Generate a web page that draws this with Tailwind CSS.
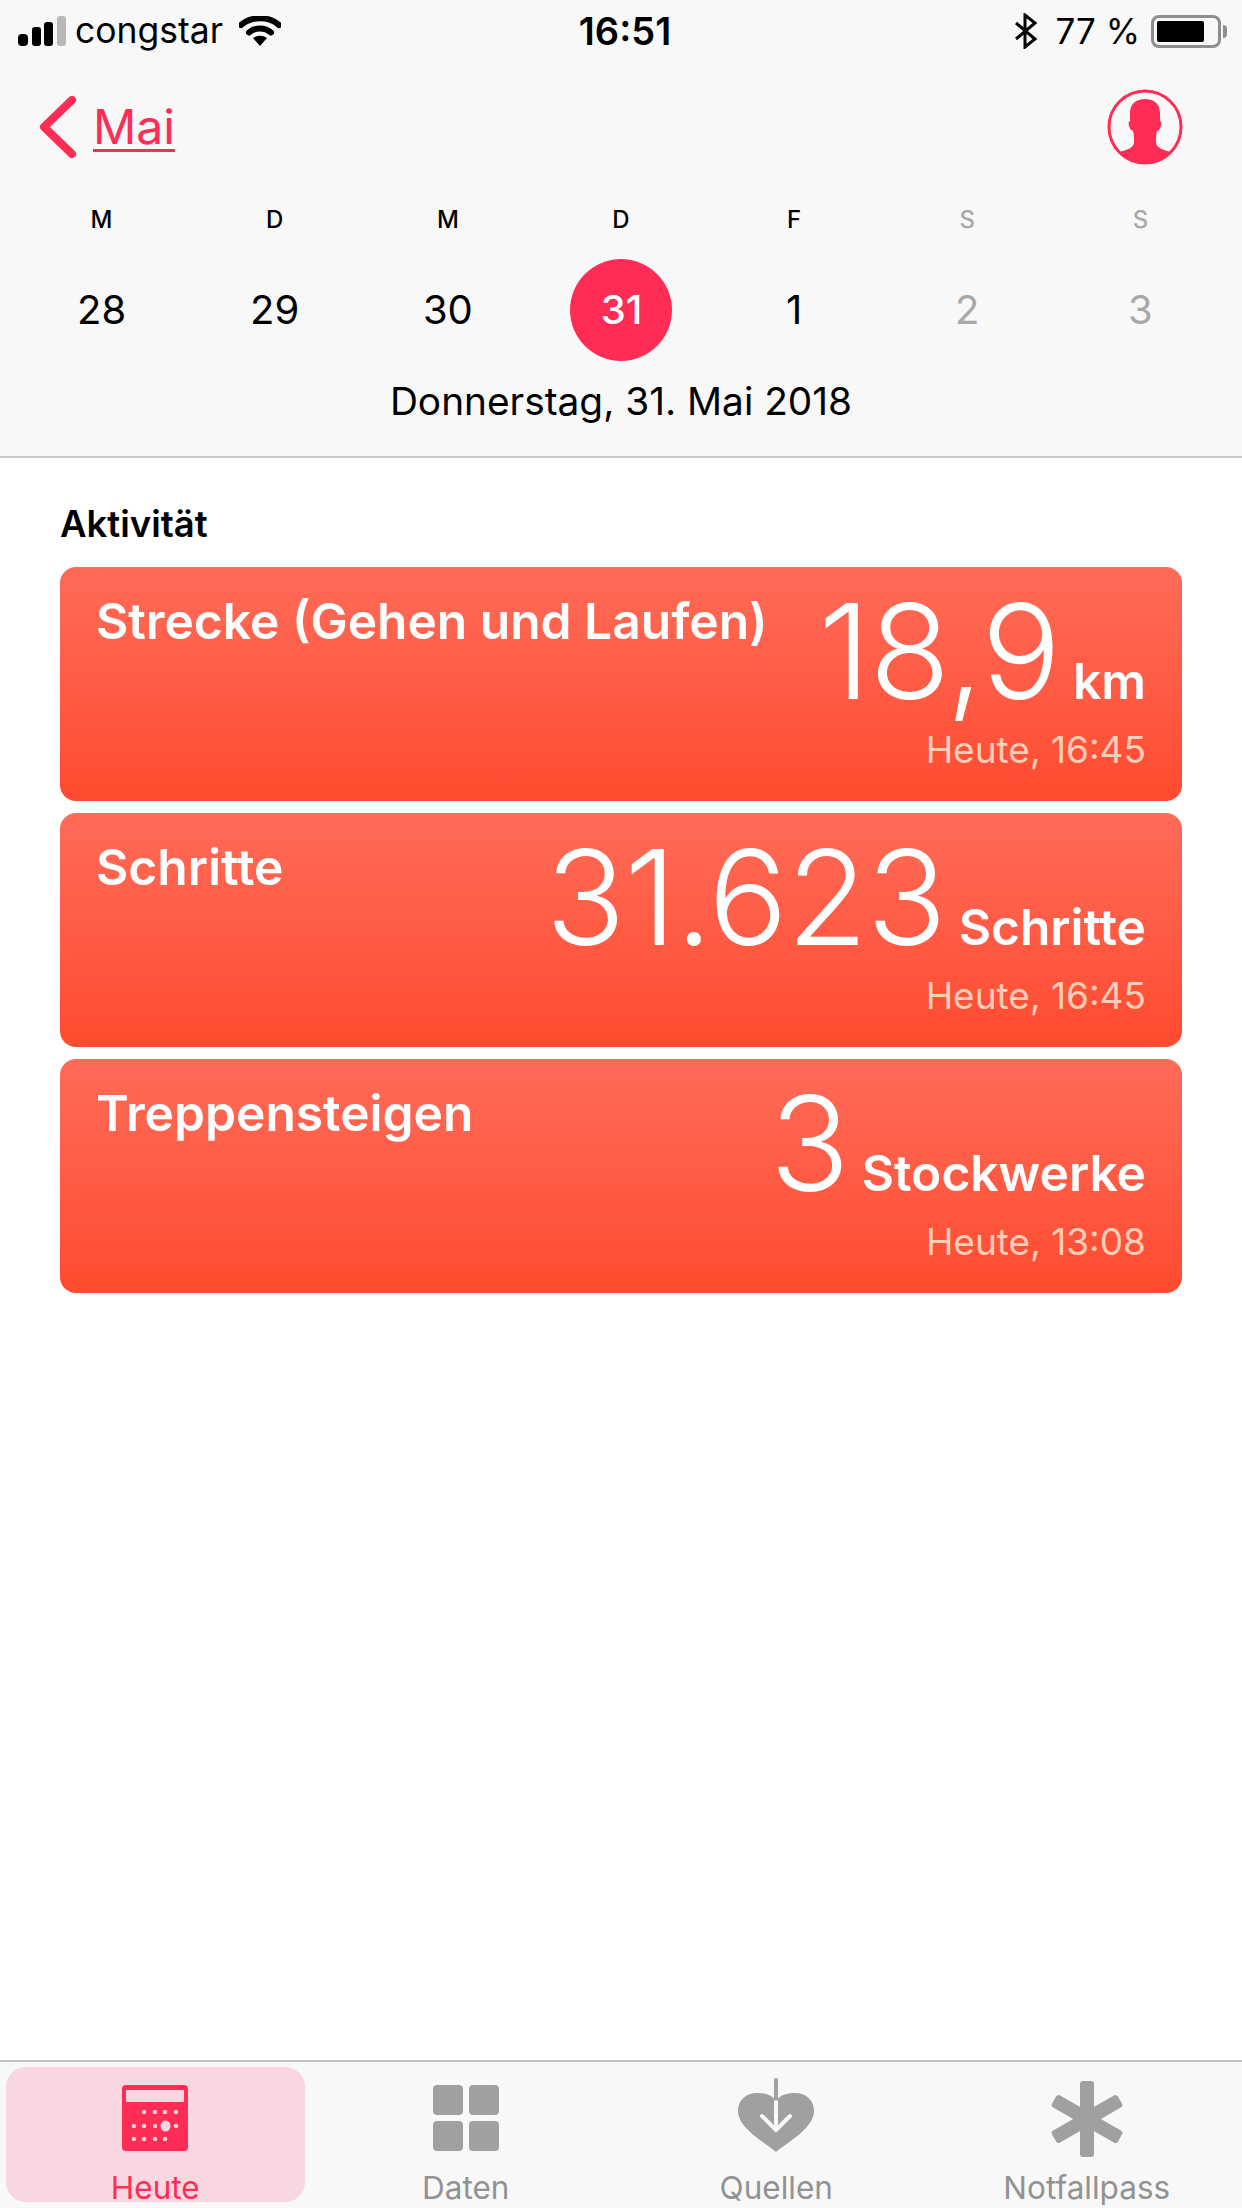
<!DOCTYPE html>
<html lang="de">
  <head>
    <meta charset="UTF-8" />
    <meta name="viewport" content="width=device-width, initial-scale=1.0" />
    <title>Health</title>
    <script src="https://cdn.jsdelivr.net/npm/@tailwindcss/browser@4"></script>
  </head>
  <body class="bg-white font-['Inter',sans-serif]">
    <div class="flex flex-col w-[1242px] h-[2208px] overflow-hidden">
      <!-- Header -->
      <header class="bg-[#f8f8f8] border-b-2 border-[#c8c8c8] h-[458px] shrink-0">
        <!-- Status bar -->
        <div class="grid grid-cols-3 items-center h-[62px] pl-[18px] pr-[15px] text-black">
          <div class="flex items-center">
            <svg width="48" height="30" viewBox="0 0 48 30">
              <rect x="0" y="18" width="10" height="12" rx="4" fill="#000" />
              <rect x="14" y="11" width="9" height="19" rx="3" fill="#000" />
              <rect x="26" y="6" width="9" height="24" rx="3" fill="#000" />
              <rect x="39" y="0" width="9" height="30" rx="3" fill="#b8b8b8" />
            </svg>
            <span class="ml-[9px] text-[35.500px] leading-none">congstar</span>
            <svg class="ml-[16px]" width="42" height="30" viewBox="0 0 42 30">
              <path d="M2 9 C12 0 30 0 40 9" fill="none" stroke="#000" stroke-width="6" stroke-linecap="round" />
              <path d="M10 16.500 C16 11 26 11 32 16.500" fill="none" stroke="#000" stroke-width="6" stroke-linecap="round" />
              <path d="M14 22 L21 30 L28 22 C24 19 18 19 14 22 Z" fill="#000" />
            </svg>
          </div>
          <div class="pl-[5px] text-center text-[38px] font-semibold leading-none">16:51</div>
          <div class="flex items-center justify-end">
            <svg width="24" height="36" viewBox="0 0 24 36">
              <path d="M2 10 L21 26 L11 34 L11 2 L21 10 L2 26" fill="none" stroke="#000" stroke-width="3" />
            </svg>
            <span class="ml-[17px] text-[35px] leading-none">77 %</span>
            <div class="ml-[11px] flex items-center">
              <div class="w-[70px] h-[33px] rounded-[8px] border-[3px] border-[#8e8e8e] p-[3px] pr-[14px]">
                <div class="h-full bg-black rounded-[2px]"></div>
              </div>
              <div class="w-[4px] h-[13px] ml-[2px] bg-[#8e8e8e] rounded-r-full"></div>
            </div>
          </div>
        </div>
        <!-- Nav -->
        <div class="flex items-center justify-between h-[130px] pl-[39px] pr-[59px]">
          <div class="flex items-center">
            <svg width="38" height="64" viewBox="0 0 38 64">
              <path d="M33 5 L5 32 L33 59" fill="none" stroke="#ff2d55" stroke-width="8" stroke-linecap="round" stroke-linejoin="round" />
            </svg>
            <span class="ml-[16px] text-[48px] leading-none text-[#ff2d55] underline decoration-[3px] underline-offset-[5px]">Mai</span>
          </div>
          <svg width="76" height="76" viewBox="0 0 76 76">
            <defs>
              <clipPath id="face"><circle cx="38" cy="38" r="37" /></clipPath>
            </defs>
            <circle cx="38" cy="38" r="36" fill="none" stroke="#ff2d55" stroke-width="3" />
            <path clip-path="url(#face)" d="M38 10 C47 10 53 15 53 24 L53 32 C55 32 55 37 52 41 L50 42 C49 46 49 50 49 54 C50 59 56 61 64 63 L70 76 L6 76 L12 63 C20 61 26 59 27 54 C27 50 27 46 26 42 L24 41 C21 37 21 32 23 32 L23 24 C23 15 29 10 38 10 Z" fill="#ff2d55" />
          </svg>
        </div>
        <!-- Week -->
        <div class="grid grid-cols-7 px-[15px] mt-[13px] text-center">
          <div class="text-[24px] font-medium leading-[30px] text-black">M</div>
          <div class="text-[24px] font-medium leading-[30px] text-black">D</div>
          <div class="text-[24px] font-medium leading-[30px] text-black">M</div>
          <div class="text-[24px] font-medium leading-[30px] text-black">D</div>
          <div class="text-[24px] font-medium leading-[30px] text-black">F</div>
          <div class="text-[24px] font-medium leading-[30px] text-[#a8a8a8]">S</div>
          <div class="text-[24px] font-medium leading-[30px] text-[#a8a8a8]">S</div>
        </div>
        <div class="grid grid-cols-7 px-[15px] mt-[24px] text-center text-[40px] leading-none">
          <div class="h-[102px] flex items-center justify-center text-black">28</div>
          <div class="h-[102px] flex items-center justify-center text-black">29</div>
          <div class="h-[102px] flex items-center justify-center text-black">30</div>
          <div class="h-[102px] flex items-center justify-center">
            <span class="ml-[1px] w-[102px] h-[102px] rounded-full bg-[#ff2d55] text-white font-medium flex items-center justify-center">31</span>
          </div>
          <div class="h-[102px] flex items-center justify-center text-black">1</div>
          <div class="h-[102px] flex items-center justify-center text-[#a8a8a8]">2</div>
          <div class="h-[102px] flex items-center justify-center text-[#a8a8a8]">3</div>
        </div>
        <div class="mt-[17px] text-center text-[38.800px] leading-[46px] text-black">Donnerstag, 31. Mai 2018</div>
      </header>

      <!-- Content -->
      <main class="flex-1 px-[60px] pt-[46px]">
        <h2 class="text-[36.500px] font-semibold leading-[40px] text-black">Aktivität</h2>
        <div class="mt-[23px] flex flex-col gap-[12px]">
          <div class="h-[234px] rounded-[16px] bg-gradient-to-b from-[#ff6b58] to-[#ff4a2e] pl-[36px] pr-[36px] pt-[14px] flex justify-between text-white">
            <div class="mt-[11px] text-[49.700px] font-semibold leading-[58px]">Strecke (Gehen und Laufen)</div>
            <div class="text-right">
              <div class="flex items-baseline justify-end h-[149px] leading-none">
                <span class="text-[132px] font-light leading-[140px] tracking-[-1px]">18,9</span>
                <span class="ml-[13px] text-[49.700px] font-semibold">km</span>
              </div>
              <div class="text-[37px] leading-[40px] text-[#ffcdb8]">Heute, 16:45</div>
            </div>
          </div>
          <div class="h-[234px] rounded-[16px] bg-gradient-to-b from-[#ff6b58] to-[#ff4a2e] pl-[36px] pr-[36px] pt-[14px] flex justify-between text-white">
            <div class="mt-[11px] text-[49.700px] font-semibold leading-[58px]">Schritte</div>
            <div class="text-right">
              <div class="flex items-baseline justify-end h-[149px] leading-none">
                <span class="text-[132px] font-light leading-[140px] tracking-[-1px]">31.623</span>
                <span class="ml-[13px] text-[49.700px] font-semibold">Schritte</span>
              </div>
              <div class="text-[37px] leading-[40px] text-[#ffcdb8]">Heute, 16:45</div>
            </div>
          </div>
          <div class="h-[234px] rounded-[16px] bg-gradient-to-b from-[#ff6b58] to-[#ff4a2e] pl-[36px] pr-[36px] pt-[14px] flex justify-between text-white">
            <div class="mt-[11px] text-[49.700px] font-semibold leading-[58px]">Treppensteigen</div>
            <div class="text-right">
              <div class="flex items-baseline justify-end h-[149px] leading-none">
                <span class="text-[132px] font-light leading-[140px] tracking-[-1px]">3</span>
                <span class="ml-[13px] text-[49.700px] font-semibold">Stockwerke</span>
              </div>
              <div class="text-[37px] leading-[40px] text-[#ffcdb8]">Heute, 13:08</div>
            </div>
          </div>
        </div>
      </main>

      <!-- Tab bar -->
      <nav class="h-[148px] shrink-0 bg-[#f8f8f8] border-t-2 border-[#c0c0c0] grid grid-cols-4 text-center text-[31.500px] leading-[36px] text-[#929292]">
        <div class="m-[6px] mt-[5px] h-[135px] rounded-[20px] bg-[#f9d7e0] flex flex-col items-center pt-[18px] text-[#ff2d55]">
          <svg class="shrink-0" width="66" height="66" viewBox="0 0 66 66">
            <rect width="66" height="66" rx="4" fill="#ff2d55" />
            <rect x="4" y="5" width="58" height="12" fill="#f9d7e0" />
            <g fill="#f9d7e0">
              <circle cx="22" cy="27" r="2.200" /><circle cx="33" cy="27" r="2.200" /><circle cx="43" cy="27" r="2.200" /><circle cx="54" cy="27" r="2.200" />
              <circle cx="12" cy="41" r="2.200" /><circle cx="22" cy="41" r="2.200" /><circle cx="33" cy="41" r="2.200" /><ellipse cx="43.500" cy="41" rx="5" ry="5.500" /><circle cx="54" cy="41" r="2.200" />
              <circle cx="12" cy="54" r="2.200" /><circle cx="22" cy="54" r="2.200" /><circle cx="33" cy="54" r="2.200" /><circle cx="43" cy="54" r="2.200" />
            </g>
          </svg>
          <span class="mt-[19px] shrink-0">Heute</span>
        </div>
        <div class="flex flex-col items-center pt-[23px]">
          <svg class="shrink-0" width="66" height="66" viewBox="0 0 66 66" fill="#a0a0a0">
            <rect x="0" y="0" width="30" height="30" rx="4" />
            <rect x="36" y="0" width="30" height="30" rx="4" />
            <rect x="0" y="36" width="30" height="30" rx="4" />
            <rect x="36" y="36" width="30" height="30" rx="4" />
          </svg>
          <span class="mt-[19px]">Daten</span>
        </div>
        <div class="flex flex-col items-center pt-[16px]">
          <svg class="shrink-0" width="76" height="74" viewBox="0 0 76 74">
            <path d="M38 74 C26 64 0 50 0 33 C0 22 8 15 19 15 C27 15 34 17 38 23 C42 17 49 15 57 15 C68 15 76 22 76 33 C76 50 50 64 38 74 Z" fill="#a0a0a0" />
            <path d="M38 2 L38 22" stroke="#a0a0a0" stroke-width="4" stroke-linecap="round" />
            <path d="M38 24 L38 51 M24 38 L38 52 L52 38" fill="none" stroke="#f8f8f8" stroke-width="4" stroke-linecap="round" stroke-linejoin="round" />
          </svg>
          <span class="mt-[18px]">Quellen</span>
        </div>
        <div class="flex flex-col items-center pt-[19px]">
          <svg class="shrink-0" width="72" height="76" viewBox="0 0 72 76" fill="#a0a0a0">
            <rect x="29" y="0" width="14" height="76" rx="3" />
            <rect x="29" y="0" width="14" height="76" rx="3" transform="rotate(60 36 38)" />
            <rect x="29" y="0" width="14" height="76" rx="3" transform="rotate(120 36 38)" />
          </svg>
          <span class="mt-[13px]">Notfallpass</span>
        </div>
      </nav>
    </div>
  </body>
</html>
